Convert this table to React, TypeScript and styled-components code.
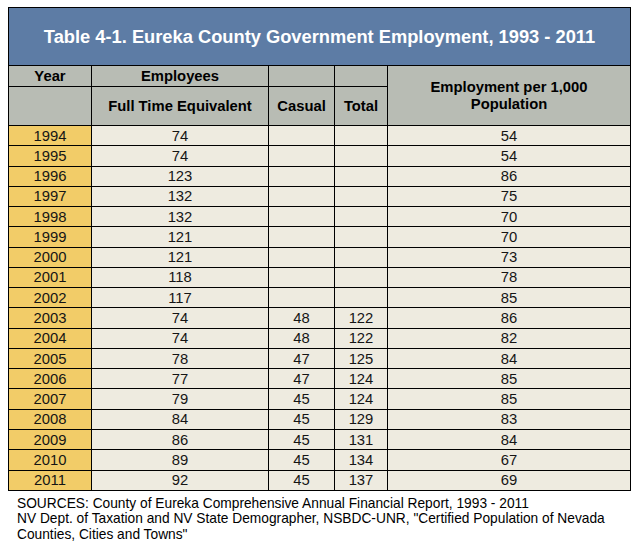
import React from "react";
import styled, { createGlobalStyle } from "styled-components";

const Global = createGlobalStyle`
  html, body { margin: 0; padding: 0; background: #ffffff; }
  body { font-family: "Liberation Sans", Arial, sans-serif; color: #111; }
`;

const Page = styled.div`
  padding: 7px 0 0 8px;
  width: 622px;
`;

const Table = styled.table`
  width: 622px;
  border-collapse: collapse;
  table-layout: fixed;
  border: 1px solid #000;
`;

const TitleCell = styled.th`
  background: #5d7ca5;
  color: #ffffff;
  font-size: 18.3px;
  font-weight: bold;
  height: 57px;
  padding: 0;
  text-align: center;
  border: 1px solid #000;
`;

const HeadCell = styled.th<{ $h?: number }>`
  background: #b8bcb4;
  color: #000;
  font-size: 14.8px;
  font-weight: bold;
  padding: 0;
  text-align: center;
  vertical-align: middle;
  border: 1px solid #000;
  height: ${(p) => (p.$h ? `${p.$h}px` : "auto")};
  line-height: 17px;
`;

const Row = styled.tr`
  height: 20.28px;
`;

const Cell = styled.td<{ $year?: boolean }>`
  background: ${(p) => (p.$year ? "#f2cc68" : "#eeebe0")};
  font-size: 14.8px;
  color: #151515;
  text-align: center;
  padding: 0;
  border: 1px solid #000;
  line-height: 16px;
`;

const Sources = styled.div`
  padding: 5px 0 0 9px;
  font-size: 13.75px;
  line-height: 15.5px;
  color: #000;
`;

type R = [string, string, string, string, string];

const rows: R[] = [
  ["1994", "74", "", "", "54"],
  ["1995", "74", "", "", "54"],
  ["1996", "123", "", "", "86"],
  ["1997", "132", "", "", "75"],
  ["1998", "132", "", "", "70"],
  ["1999", "121", "", "", "70"],
  ["2000", "121", "", "", "73"],
  ["2001", "118", "", "", "78"],
  ["2002", "117", "", "", "85"],
  ["2003", "74", "48", "122", "86"],
  ["2004", "74", "48", "122", "82"],
  ["2005", "78", "47", "125", "84"],
  ["2006", "77", "47", "124", "85"],
  ["2007", "79", "45", "124", "85"],
  ["2008", "84", "45", "129", "83"],
  ["2009", "86", "45", "131", "84"],
  ["2010", "89", "45", "134", "67"],
  ["2011", "92", "45", "137", "69"],
];

export default function App() {
  return (
    <Page>
      <Global />
      <Table>
        <colgroup>
          <col style={{ width: 83 }} />
          <col style={{ width: 177 }} />
          <col style={{ width: 66 }} />
          <col style={{ width: 53 }} />
          <col style={{ width: 243 }} />
        </colgroup>
        <thead>
          <tr>
            <TitleCell colSpan={5}>
              Table 4-1. Eureka County Government Employment, 1993 - 2011
            </TitleCell>
          </tr>
          <tr>
            <HeadCell $h={20}>Year</HeadCell>
            <HeadCell>Employees</HeadCell>
            <HeadCell></HeadCell>
            <HeadCell></HeadCell>
            <HeadCell rowSpan={2}>
              Employment per 1,000
              <br />
              Population
            </HeadCell>
          </tr>
          <tr>
            <HeadCell $h={38}></HeadCell>
            <HeadCell>Full Time Equivalent</HeadCell>
            <HeadCell>Casual</HeadCell>
            <HeadCell>Total</HeadCell>
          </tr>
        </thead>
        <tbody>
          {rows.map((r) => (
            <Row key={r[0]}>
              <Cell $year>{r[0]}</Cell>
              <Cell>{r[1]}</Cell>
              <Cell>{r[2]}</Cell>
              <Cell>{r[3]}</Cell>
              <Cell>{r[4]}</Cell>
            </Row>
          ))}
        </tbody>
      </Table>
      <Sources>
        SOURCES: County of Eureka Comprehensive Annual Financial Report, 1993 - 2011
        <br />
        NV Dept. of Taxation and NV State Demographer, NSBDC-UNR, "Certified Population of Nevada
        <br />
        Counties, Cities and Towns"
      </Sources>
    </Page>
  );
}
